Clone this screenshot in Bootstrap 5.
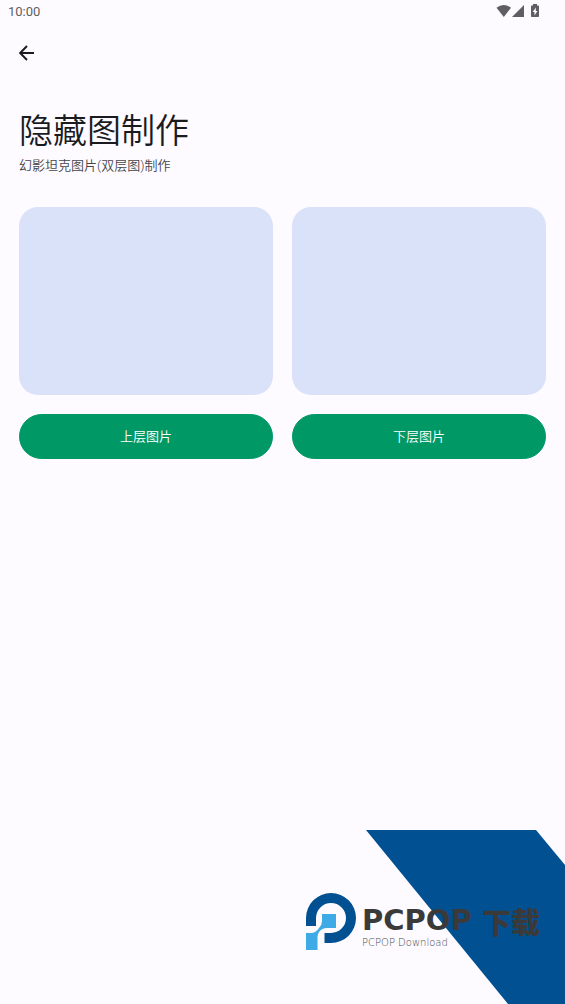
<!DOCTYPE html>
<html lang="zh-CN">
<head>
<meta charset="utf-8">
<meta name="viewport" content="width=device-width, initial-scale=1">
<title>隐藏图制作</title>
<link href="https://cdn.jsdelivr.net/npm/bootstrap@5.3.0/dist/css/bootstrap.min.css" rel="stylesheet">
<style>
  body { background: #fdfbff; color: #1a1b1f; font-family: Roboto, "Noto Sans CJK SC", sans-serif; }
  .status-bar { height: 24px; padding: 0 25px 0 8px; font-size: 13px; line-height: 24px; color: #5f5f61; }
  .app-bar { height: 58px; padding: 0 19px; }
  .back-link { color: #1a1b1f; line-height: 0; }
  .content { padding: 24px 19px 0; }
  .page-title { font-size: 34px; line-height: 50px; font-weight: 350; }
  .page-subtitle { font-size: 13px; line-height: 20px; font-weight: 350; color: #45464a; }
  .picker-grid { gap: 19px; margin-top: 31px; }
  .preview { height: 188px; border-radius: 19px; background: #dae2f9; }
  .btn-pick { --bs-btn-bg: #009966; --bs-btn-color: #fff; --bs-btn-border-color: #009966; --bs-btn-hover-bg: #00855a; --bs-btn-hover-color: #fff; height: 45px; margin-top: 19px; font-size: 13px; line-height: 20px; font-weight: 350; }
  .brand-strip { height: 174px; padding: 63px 25px 0 0; }
  .brand-stripe { top: 0; right: 0; }
  .brand-body { gap: 6px; }
  .brand-text { padding-top: 12px; }
  .wordmark { width: 178px; color: #3a3a3a; font: 700 29px/30px "DejaVu Sans", sans-serif; }
  .wordmark-cjk { font: 900 29px/32px "Noto Sans CJK SC", sans-serif; }
  .tagline { color: #4a4b4e; font: 200 10px/12px "DejaVu Sans", sans-serif; }
</style>
</head>
<body class="min-vh-100 d-flex flex-column">
  <header>
    <div class="status-bar d-flex justify-content-between">
      <span>10:00</span>
      <span class="d-flex align-items-start pt-1">
        <svg width="44" height="14" viewBox="0 0 44 14" fill="#5f5f61" aria-hidden="true">
          <path d="M.5 3.8Q7.5-1.8 15 3.8L7.8 13Z"/>
          <path d="M28 1v12H16Z"/>
          <path d="M37 0h4v1.5h1.2q.8 0 .8.8v9.9q0 .8-.8.8h-6.4q-.8 0-.8-.8V2.300q0-.8.8-.8H37Z"/>
          <path fill="#fdfbff" d="M39.800 3.500 36.700 8h1.800v3.500L41.400 7h-1.600Z"/>
        </svg>
      </span>
    </div>
    <nav class="app-bar d-flex align-items-center" aria-label="导航">
      <a class="back-link" href="#" aria-label="返回">
        <svg width="16" height="16" viewBox="0 0 16 16" fill="none" stroke="currentColor" stroke-width="1.9"><path d="M15 8H1.500M8 1 1.200 8 8 15"/></svg>
      </a>
    </nav>
  </header>

  <main class="content">
    <h1 class="page-title mb-0">隐藏图制作</h1>
    <p class="page-subtitle mb-0">幻影坦克图片(双层图)制作</p>
    <div class="picker-grid d-flex">
      <section class="flex-fill">
        <div class="preview"></div>
        <button type="button" class="btn btn-pick rounded-pill w-100">上层图片</button>
      </section>
      <section class="flex-fill">
        <div class="preview"></div>
        <button type="button" class="btn btn-pick rounded-pill w-100">下层图片</button>
      </section>
    </div>
  </main>

  <footer class="brand-strip mt-auto position-relative d-flex justify-content-end align-items-start">
    <svg class="brand-stripe position-absolute" width="199" height="174" viewBox="0 0 199 174" aria-hidden="true">
      <path fill="#005092" d="M0 0H170L199 35V174H142Z"/>
    </svg>
    <div class="brand-body position-relative d-flex">
      <svg width="50" height="57" viewBox="0 0 50 57" aria-hidden="true">
        <path fill="#005092" d="M0 33V25A25 25 0 1 1 25 50H18.500V40H25A15 15 0 1 0 10 25V33Z"/>
        <path fill="#3eaae6" d="M16 21H30V35H21Q16 35 13 39Q11.500 41 11.500 44V57H0V40H6Q10 39.500 13 35Q16 32 16 28Z"/>
      </svg>
      <div class="brand-text">
        <div class="wordmark d-flex justify-content-between"><span>PCPOP</span><span class="wordmark-cjk">下载</span></div>
        <div class="tagline">PCPOP Download</div>
      </div>
    </div>
  </footer>
<script src="https://cdn.jsdelivr.net/npm/bootstrap@5.3.0/dist/js/bootstrap.bundle.min.js"></script>
</body>
</html>
